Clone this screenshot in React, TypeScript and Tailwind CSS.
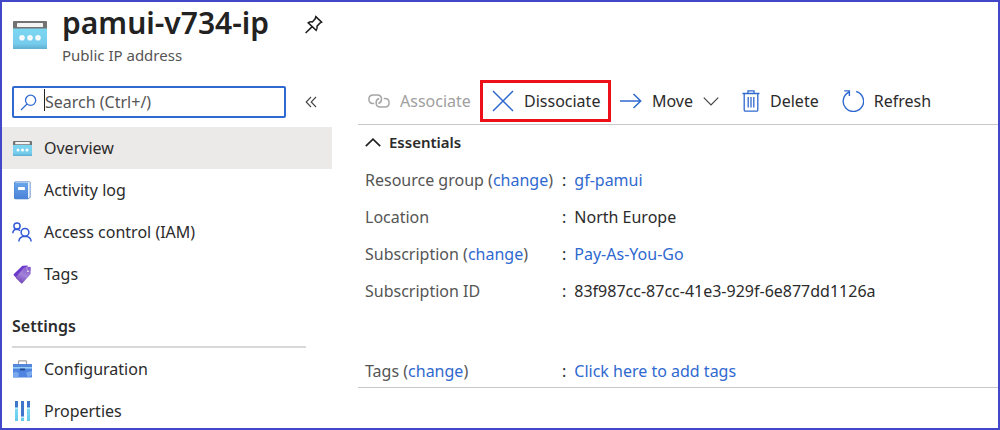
import type { ReactNode } from "react";

type IconProps = { className?: string };

function PublicIpIcon({ className }: IconProps) {
  return (
    <svg viewBox="0 0 34 28" className={className} preserveAspectRatio="none" aria-hidden="true">
      <defs>
        <linearGradient id="ipBody" x1="0" y1="0" x2="0" y2="1">
          <stop offset="0" stopColor="#7cd7f2" />
          <stop offset="0.75" stopColor="#76ccec" />
          <stop offset="1" stopColor="#5faed0" />
        </linearGradient>
      </defs>
      <rect y="7" width="34" height="21" rx="0.6" fill="url(#ipBody)" />
      <path d="M0 .8Q0 0 .8 0H33.2Q34 0 34 .8V7.5H0Z" fill="#737373" />
      <rect x="4" y="2" width="26" height="4" rx="0.5" fill="#f4f4f4" />
      <circle cx="9" cy="16.8" r="2.8" fill="#f5fafc" />
      <circle cx="17" cy="16.8" r="2.8" fill="#f5fafc" />
      <circle cx="25" cy="16.8" r="2.8" fill="#f5fafc" />
    </svg>
  );
}

function PinIcon() {
  return (
    <svg viewBox="0 0 20 20" className="h-5 w-5" fill="none" stroke="#1c1c1c" strokeWidth="1.5" aria-hidden="true">
      <path d="M11.8 2.6 17.6 8.2 15.6 9.4 13 12.2Q13.6 14.4 12.2 16.4L4.2 8.8Q6.2 7.4 8.4 8L11.2 4.8Z M8.2 12.6 1.6 19" />
    </svg>
  );
}

function SearchIcon() {
  return (
    <svg viewBox="0 0 17 17" className="h-[17px] w-[17px]" fill="none" stroke="#2f6bd0" strokeWidth="1.3" aria-hidden="true">
      <circle cx="10.6" cy="6.3" r="5.1" />
      <path d="M7 10 1 16" />
    </svg>
  );
}

function CollapseIcon() {
  return (
    <svg viewBox="0 0 12 12" className="h-3 w-3" fill="none" stroke="#444" strokeWidth="1.1" aria-hidden="true">
      <path d="M6 1 1.2 6 6 11M11 1 6.2 6 11 11" />
    </svg>
  );
}

function LogIcon() {
  return (
    <svg viewBox="0 0 19 19" className="h-[19px] w-[19px]" aria-hidden="true">
      <defs>
        <linearGradient id="logCover" x1="0" y1="0" x2="0" y2="1">
          <stop offset="0" stopColor="#68a5ea" />
          <stop offset="1" stopColor="#4a82d6" />
        </linearGradient>
      </defs>
      <path d="M2.5.5H16.5Q17.5.5 17.5 1.5V16.5L15 18.3H2.5Q1 18 1 16.5V2Q1 .5 2.5.5Z" fill="#3f74bf" />
      <path d="M2.5 1H16.8V16.3L15 17.5V1.8H2Z" fill="#e8f1fb" />
      <path d="M1.3 1.8H15V18H2.7Q1.3 18 1.3 16.6Z" fill="url(#logCover)" />
      <rect x="5" y="6" width="7" height="3" rx="0.4" fill="#fff" />
    </svg>
  );
}

function PeopleIcon() {
  return (
    <svg viewBox="0 0 20 20" className="h-5 w-5" fill="none" stroke="#3458d8" strokeWidth="1.5" aria-hidden="true">
      <circle cx="5" cy="4" r="3.1" />
      <path d="M.8 11.2Q1 7.3 4.8 7.2 6.7 7.2 8 8.7" />
      <circle cx="13" cy="10.3" r="3.9" />
      <path d="M6.8 19.5Q7.4 14.4 13 14.3 18.6 14.4 19.2 19.5" />
    </svg>
  );
}

function TagIcon() {
  return (
    <svg viewBox="0 0 19 19" className="h-[19px] w-[19px]" aria-hidden="true">
      <defs>
        <linearGradient id="tagFace" x1="0.7" y1="0" x2="0.3" y2="1">
          <stop offset="0" stopColor="#8c5bd0" />
          <stop offset="0.5" stopColor="#a283d8" />
          <stop offset="1" stopColor="#7040b8" />
        </linearGradient>
      </defs>
      <path d="M8.6 1.4Q9.2.8 10 .8L14.5.6 15 2 4 13.6.9 10.4Q.2 9.7.9 9Z" fill="#6a39cb" />
      <path d="M11.8 2.2 17 1.8Q17.8 1.8 17.8 2.6L17.6 8.6Q17.6 9.2 17.1 9.7L9.4 18.2Q8.8 18.8 8.2 18.2L3 13.2Q2.5 12.6 3 12L11 2.6Q11.3 2.3 11.8 2.2Z" fill="url(#tagFace)" />
      <circle cx="15" cy="6.2" r="1.3" fill="#f4effb" stroke="#5f36a5" strokeWidth="0.5" />
      <path d="M14.9 6Q12.7 3.2 14.2 1" fill="none" stroke="#c9b6ec" strokeWidth="0.7" />
    </svg>
  );
}

function ToolboxIcon() {
  return (
    <svg viewBox="0 0 19 18" className="h-[18px] w-[19px]" aria-hidden="true">
      <path d="M5.5 4.3V1.5Q5.5.8 6.2.8H12.8Q13.5.8 13.5 1.5V4.3" fill="none" stroke="#a9a49f" strokeWidth="1.2" />
      <rect y="4" width="19" height="13.5" rx="0.7" fill="#4f84e0" />
      <path d="M0 4.7Q0 4 .7 4H18.3Q19 4 19 4.7V7.5H0Z" fill="#5587dc" />
      <rect y="7.2" width="19" height="1.3" fill="#a9e2f8" />
      <path d="M0 13Q3.5 10.5 6 13.5L5 17.5H.7Q0 17.5 0 16.8ZM13 12.5 19 11V15L15 17.5Z" fill="#7ba9ee" />
      <rect x="7" y="8.5" width="5" height="2" rx="0.3" fill="#214b94" />
    </svg>
  );
}

function SlidersIcon() {
  return (
    <svg viewBox="0 0 19 20" className="h-5 w-[19px]" aria-hidden="true">
      <defs>
        <linearGradient id="barFill" x1="0" y1="0" x2="0" y2="1">
          <stop offset="0" stopColor="#8be5fa" />
          <stop offset="1" stopColor="#63c9ea" />
        </linearGradient>
      </defs>
      <rect x="2" y="0" width="3" height="20" fill="url(#barFill)" />
      <rect x="8" y="0" width="3" height="20" fill="url(#barFill)" />
      <rect x="14" y="0" width="3" height="20" fill="url(#barFill)" />
      <path d="M2 0H5V7H2ZM14 0H17V7H14ZM8 0H11V16H8Z" fill="#3f76cd" />
      <path d="M1.5 6.5H5.5V7.7H1.5ZM13.5 6.5H17.5V7.7H13.5ZM7.5 15.5H11.5V16.7H7.5Z" fill="#d9f5fd" />
    </svg>
  );
}

function LinkIcon() {
  return (
    <svg viewBox="0 0 22 14" className="h-[14px] w-[22px]" fill="none" stroke="#a6a6a6" strokeWidth="1.5" aria-hidden="true">
      <path d="M6.2 9.6H5Q.9 9.4.9 5.3.9 1 5.2 1H9.3Q13.5 1 13.5 5.3 13.5 8.6 10.4 9.5" />
      <path d="M11.2 4.5Q8.1 5.2 8.1 8.7 8.1 13 12.3 13H16.8Q21.1 13 21.1 8.7 21.1 4.5 17 4.4H15.8" />
    </svg>
  );
}

function CrossIcon() {
  return (
    <svg viewBox="0 0 22 22" className="h-[22px] w-[22px]" fill="none" stroke="#2f69cf" strokeWidth="1.5" aria-hidden="true">
      <path d="M1 1 21 21M21 1 1 21" />
    </svg>
  );
}

function ArrowIcon() {
  return (
    <svg viewBox="0 0 22 16" className="h-4 w-[22px]" fill="none" stroke="#2f69cf" strokeWidth="1.5" aria-hidden="true">
      <path d="M0 8H20.5M13.5 1 20.7 8 13.5 15" />
    </svg>
  );
}

function TrashIcon() {
  return (
    <svg viewBox="0 0 18 22" className="h-[22px] w-[18px]" fill="none" stroke="#2f69cf" strokeWidth="1.3" aria-hidden="true">
      <path d="M.5 3.5H17.5M6 3.5V.9H12V3.5M2.2 3.5V20Q2.2 21.2 3.4 21.2H14.6Q15.8 21.2 15.8 20V3.5M6.2 7V17.5M9 7V17.5M11.8 7V17.5" />
    </svg>
  );
}

function RefreshIcon() {
  return (
    <svg viewBox="0 0 22 22" className="h-[22px] w-[22px]" fill="none" stroke="#2f69cf" strokeWidth="1.4" aria-hidden="true">
      <path d="M14.2 1.5A10.2 10.2 0 1 1 7 2.1M2.2.9H7.4V6.1" />
    </svg>
  );
}

function Chevron({ up = false }: { up?: boolean }) {
  return up ? (
    <svg viewBox="0 0 16 9" className="h-[9px] w-4" fill="none" stroke="#222" strokeWidth="1.7" aria-hidden="true">
      <path d="M.8 8.2 8 1.2 15.2 8.2" />
    </svg>
  ) : (
    <svg viewBox="0 0 16 9" className="h-[9px] w-4" fill="none" stroke="#444" strokeWidth="1.2" aria-hidden="true">
      <path d="M.8.7 8 8 15.2.7" />
    </svg>
  );
}

function NavLink({ icon, label, active = false, compact = false }: { icon: ReactNode; label: string; active?: boolean; compact?: boolean }) {
  return (
    <li>
      <a
        href="#"
        aria-current={active ? "page" : undefined}
        className={`flex items-center gap-3 pl-[10px] ${compact ? "h-[34px]" : "h-[42px]"} ${active ? "bg-[#ebeae9]" : ""}`}
      >
        <span className="flex w-5 justify-center">{icon}</span>
        {label}
      </a>
    </li>
  );
}

function Command({ icon, label, children }: { icon: ReactNode; label: string; children?: ReactNode }) {
  return (
    <button type="button" className="flex items-center gap-[10px]">
      {icon}
      {label}
      {children}
    </button>
  );
}

function Detail({ label, change = false, link = false, value }: { label: string; change?: boolean; link?: boolean; value: string }) {
  return (
    <div className="flex h-8 items-center">
      <dt className="w-[197px] text-[#555]">
        {label}
        {change && (
          <>
            {" ("}
            <a href="#" className="text-[#2f69cf]">change</a>)
          </>
        )}
      </dt>
      <dd className="flex gap-2">
        <span>:</span>
        {link ? <a href="#" className="text-[#2f69cf]">{value}</a> : value}
      </dd>
    </div>
  );
}

export default function App() {
  return (
    <div className="flex min-h-screen border-2 border-[#4347c9] bg-white font-['Noto_Sans','Open_Sans',sans-serif] text-base leading-6 text-[#2b2b2b]">
      <aside className="w-[330px] shrink-0">
        <header className="flex h-[84px] pl-[11px]">
          <PublicIpIcon className="mt-[19px] h-7 w-[34px] shrink-0" />
          <div className="ml-[15px]">
            <h1 className="text-3xl leading-[42px] font-semibold text-[#222]">pamui-v734-ip</h1>
            <p className="text-[15px] leading-[22px] text-[#555]">Public IP address</p>
          </div>
          <button type="button" aria-label="Pin to dashboard" className="mt-3 mr-2 ml-auto h-5 w-5">
            <PinIcon />
          </button>
        </header>

        <div className="flex items-center justify-between pr-[15px] pl-[10px]">
          <label className="relative flex h-8 w-[274px] items-center rounded-xs border-2 border-[#2f69cf] pl-[6px]">
            <SearchIcon />
            <input
              type="text"
              aria-label="Search (Ctrl+/)"
              placeholder="Search (Ctrl+/)"
              className="ml-2 min-w-0 flex-1 bg-transparent outline-none placeholder:text-[#555] placeholder:opacity-100"
            />
            <span className="absolute top-[1px] left-[30px] h-[22px] w-px bg-[#222]" />
          </label>
          <button type="button" aria-label="Collapse menu">
            <CollapseIcon />
          </button>
        </div>

        <nav className="pt-[9px]">
          <ul>
            <NavLink active label="Overview" icon={<PublicIpIcon className="h-[15px] w-[19px]" />} />
            <NavLink label="Activity log" icon={<LogIcon />} />
            <NavLink label="Access control (IAM)" icon={<PeopleIcon />} />
            <NavLink label="Tags" icon={<TagIcon />} />
          </ul>
          <h2 className="mr-[26px] ml-[10px] border-b-2 border-[#d8d8d8] pt-[19px] pb-2 font-semibold">Settings</h2>
          <ul className="mt-1 flex flex-col gap-2">
            <NavLink compact label="Configuration" icon={<ToolboxIcon />} />
            <NavLink compact label="Properties" icon={<SlidersIcon />} />
          </ul>
        </nav>
      </aside>

      <main className="ml-[26px] min-w-0 flex-1 pt-[78px]">
        <div role="toolbar" aria-label="Commands" className="flex h-[45px] items-start border-b border-[#c8c8c8] whitespace-nowrap">
          <button type="button" disabled className="flex h-[42px] w-[122px] items-center gap-[10px] pl-[10px] text-[#a0a0a0]">
            <LinkIcon />
            Associate
          </button>
          <div className="flex h-[42px] w-[131px] items-center border-3 border-[#ee1018] pl-[9px]">
            <Command icon={<CrossIcon />} label="Dissociate" />
          </div>
          <div className="flex h-[42px] items-center gap-[23px] pl-[9px]">
            <Command icon={<ArrowIcon />} label="Move">
              <Chevron />
            </Command>
            <Command icon={<TrashIcon />} label="Delete" />
            <Command icon={<RefreshIcon />} label="Refresh" />
          </div>
        </div>

        <section className="border-b border-[#c8c8c8] pl-[7px]">
          <h2>
            <button type="button" aria-expanded="true" className="flex h-[34px] items-center gap-2 text-[15px] font-semibold">
              <Chevron up />
              Essentials
            </button>
          </h2>
          <dl className="flex flex-col gap-[5px] pt-[5px]">
            <Detail label="Resource group" change value="gf-pamui" link />
            <Detail label="Location" value="North Europe" />
            <Detail label="Subscription" change value="Pay-As-You-Go" link />
            <Detail label="Subscription ID" value="83f987cc-87cc-41e3-929f-6e877dd1126a" />
            <div className="pt-[43px]">
              <Detail label="Tags" change value="Click here to add tags" link />
            </div>
          </dl>
        </section>
      </main>
    </div>
  );
}
